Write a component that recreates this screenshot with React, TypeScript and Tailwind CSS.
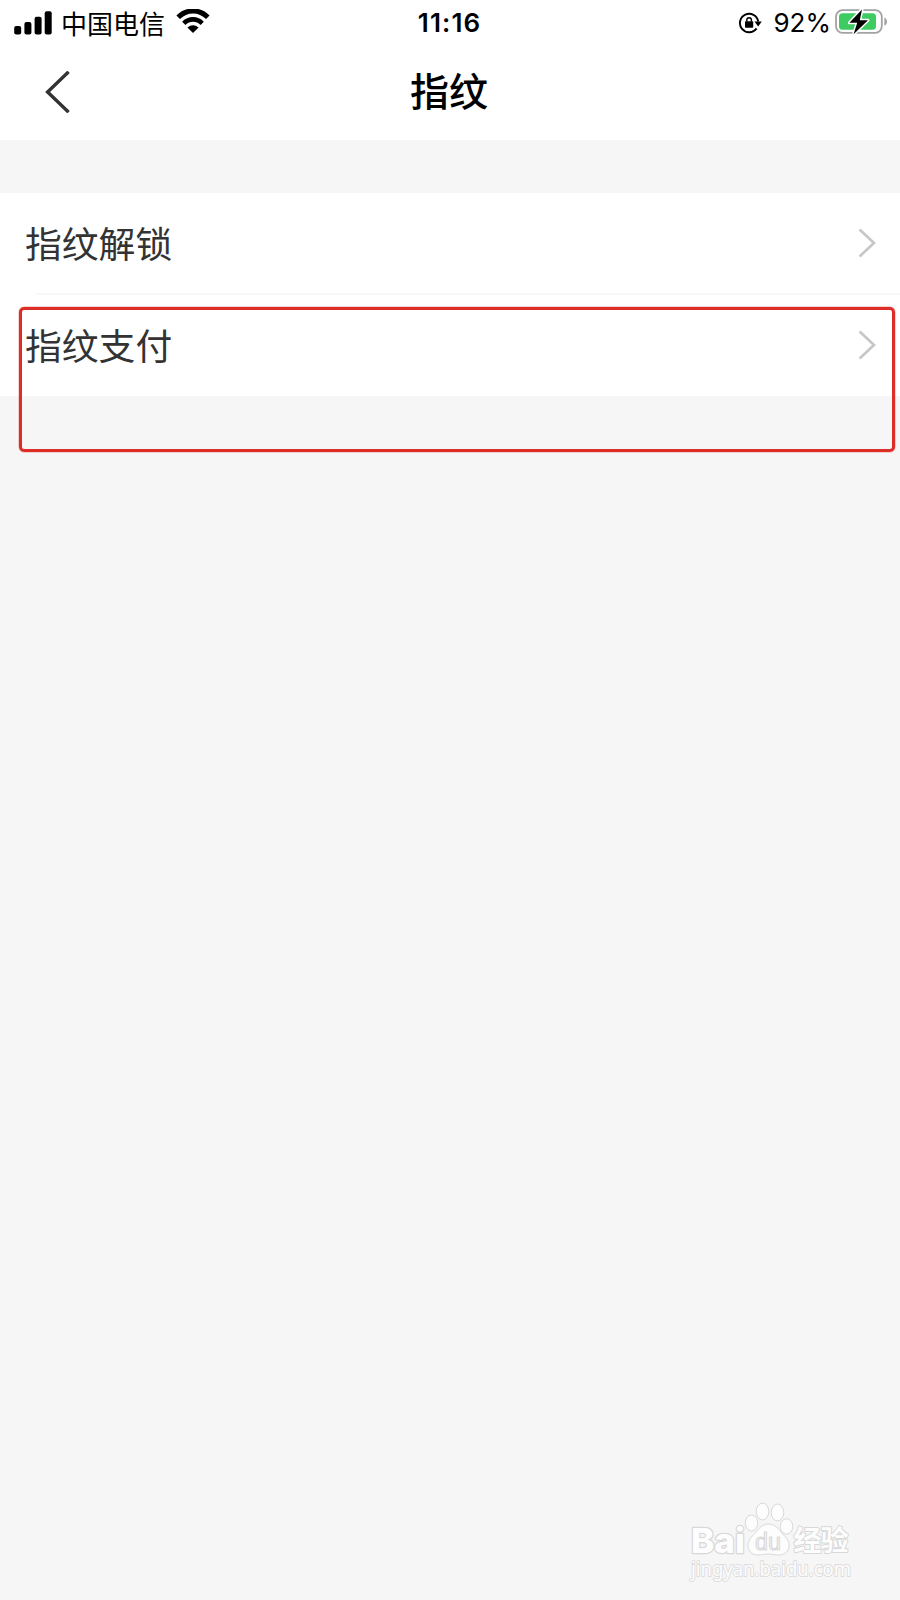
import React from 'react';

const SignalIcon: React.FC = () => (
  <svg width="38" height="24" viewBox="0 0 38 24" fill="#000">
    <rect x="0.2" y="15" width="7" height="8.5" rx="2" />
    <rect x="10.4" y="11" width="7" height="12.5" rx="2" />
    <rect x="20.6" y="5.7" width="7" height="17.8" rx="2" />
    <rect x="30.7" y="0.3" width="7" height="23.2" rx="2" />
  </svg>
);

const WifiIcon: React.FC = () => (
  <svg width="34" height="24" viewBox="0 0 34 24" fill="none" stroke="#000">
    <path d="M2.2 8.2C10.5 -0.2 23.5 -0.2 31.8 8.2" strokeWidth="5" />
    <path d="M7.8 14.3C13 9.1 21 9.1 26.2 14.3" strokeWidth="4.6" />
    <path d="M11.4 18.6C14.5 15.3 19.5 15.3 22.6 18.6L17 24Z" fill="#000" stroke="none" />
  </svg>
);

const RotationLockIcon: React.FC = () => (
  <svg width="24" height="22" viewBox="0 0 24 22" fill="none" stroke="#000">
    <path d="M18.6 16.4A9.2 9.2 0 1 1 20.2 9.5" strokeWidth="1.9" />
    <path d="M16.4 9.4H23.8L20.2 14.4Z" fill="#000" stroke="none" />
    <rect x="7" y="9.3" width="8.2" height="6.4" rx="0.8" fill="#000" stroke="none" />
    <path d="M8.8 9.8V8a2.3 2.3 0 0 1 4.6 0V9.8" strokeWidth="1.4" />
  </svg>
);

const BatteryIcon: React.FC = () => (
  <svg width="54" height="30" viewBox="0 0 54 30">
    <rect x="1" y="3.2" width="45.8" height="22.6" rx="6.5" fill="#fff" stroke="#a3a3a3" strokeWidth="1.8" />
    <rect x="4" y="6.2" width="37" height="16.6" rx="3.5" fill="#3ecb62" />
    <path d="M49.3 10.4c3.6 1.3 3.6 7 0 8.3z" fill="#a3a3a3" />
    <path d="M27 2.4L14.4 15.8h7.8l-3.6 11.4L33 13.200h-8.200z" fill="#000" stroke="#fff" strokeWidth="3" paintOrder="stroke" strokeLinejoin="round" />
  </svg>
);

const Chevron: React.FC = () => (
  <svg width="18" height="30" viewBox="0 0 18 30" fill="none" stroke="#c7c7c7" strokeWidth="2.7">
    <path d="M1.6 1.6L16 15L1.6 28.4" />
  </svg>
);

const StatusBar: React.FC = () => (
  <div className="grid h-[46px] grid-cols-[1fr_auto_1fr] items-center pl-3.5 pr-[11px] text-black">
    <div className="flex items-center">
      <SignalIcon />
      <span className="-mt-px ml-[9px] font-['Noto_Sans_CJK_SC',sans-serif] text-[26px] leading-none">中国电信</span>
      <span className="ml-[11px] -mt-1"><WifiIcon /></span>
    </div>
    <span className="-ml-1 font-[Inter,sans-serif] text-[26px] font-semibold leading-none tracking-[1.1px]">11:16</span>
    <div className="flex items-center justify-end">
      <RotationLockIcon />
      <span className="ml-[11px] font-[Inter,sans-serif] text-[26px] leading-none">92%</span>
      <span className="ml-1 -mt-0.5"><BatteryIcon /></span>
    </div>
  </div>
);

const Row: React.FC<{ label: string }> = ({ label }) => (
  <div className="flex h-[101px] items-center justify-between pb-0.5 pl-[25px] pr-6">
    <span className="font-['Noto_Sans_CJK_SC',sans-serif] text-[36.8px] leading-none text-[#333]">{label}</span>
    <Chevron />
  </div>
);

const Watermark: React.FC = () => (
  <svg
    className="absolute left-[670px] top-[1490px]"
    width="200"
    height="100"
    viewBox="0 0 200 100"
    fill="#fdfdfd"
    stroke="#d8d8d8"
    strokeWidth="1"
    strokeLinejoin="round"
  >
    <text x="21" y="63" fontFamily="Inter, sans-serif" fontSize="34.5" fontWeight="800" textLength="54" lengthAdjust="spacingAndGlyphs" strokeWidth="2.4" paintOrder="stroke">Bai</text>
    <ellipse cx="81.5" cy="33" rx="6.3" ry="8" />
    <ellipse cx="92.5" cy="21.5" rx="6.3" ry="8.4" />
    <ellipse cx="107.5" cy="22.5" rx="6.3" ry="8.4" />
    <ellipse cx="116.5" cy="36.5" rx="6.3" ry="7.7" />
    <path d="M98.5 34C107 34 109.500 41.500 115 46.500C123 54 118.500 65 109 65C105 65 102 64 98.500 64C95 64 92 65 88 65C78 65 74.500 54 82 46.500C87.500 41.500 90 34 98.500 34Z" />
    <text x="85" y="60" fontFamily="'Liberation Sans', sans-serif" fontSize="23" textLength="26" lengthAdjust="spacingAndGlyphs" fill="#f5f5f5">du</text>
    <text x="123.5" y="61" fontFamily="'Noto Sans CJK SC', sans-serif" fontSize="28" fontWeight="700" textLength="55" strokeWidth="2" paintOrder="stroke">经验</text>
    <text x="21" y="85.5" fontFamily="'Noto Sans', sans-serif" fontSize="19" textLength="160" lengthAdjust="spacingAndGlyphs" strokeWidth="1.8" stroke="#dcdcdc" paintOrder="stroke">jingyan.baidu.com</text>
  </svg>
);

export default function App() {
  return (
    <div className="relative h-[1600px] w-[900px] overflow-hidden bg-[#f6f6f6]">
      <div className="bg-white">
        <StatusBar />
        {/* Title bar */}
        <div className="grid h-[94px] grid-cols-[1fr_auto_1fr] items-center px-[45px] pb-[3px]">
          <svg width="25" height="42" viewBox="0 0 25 42" fill="none" stroke="#333" strokeWidth="3.4">
            <path d="M23.6 0.8L2.6 21L23.6 41.2" />
          </svg>
          <h1 className="-mt-1 pr-0.5 font-['Noto_Sans_CJK_SC',sans-serif] text-[39px] font-medium leading-none text-black">指纹</h1>
        </div>
      </div>

      {/* Settings list */}
      <div className="mt-[53px] bg-white">
        <Row label="指纹解锁" />
        <div className="-mt-px ml-9 h-0.5 bg-[#f7f7f7]" />
        <div className="-mb-px">
          <Row label="指纹支付" />
        </div>
      </div>

      {/* Highlight */}
      <div className="absolute left-[19px] top-[307px] h-[145px] w-[876px] rounded-[5px] border-3 border-[#dc2e26] ring-[0.5px] ring-[#dc2e26]/40" />
      <Watermark />
    </div>
  );
}
